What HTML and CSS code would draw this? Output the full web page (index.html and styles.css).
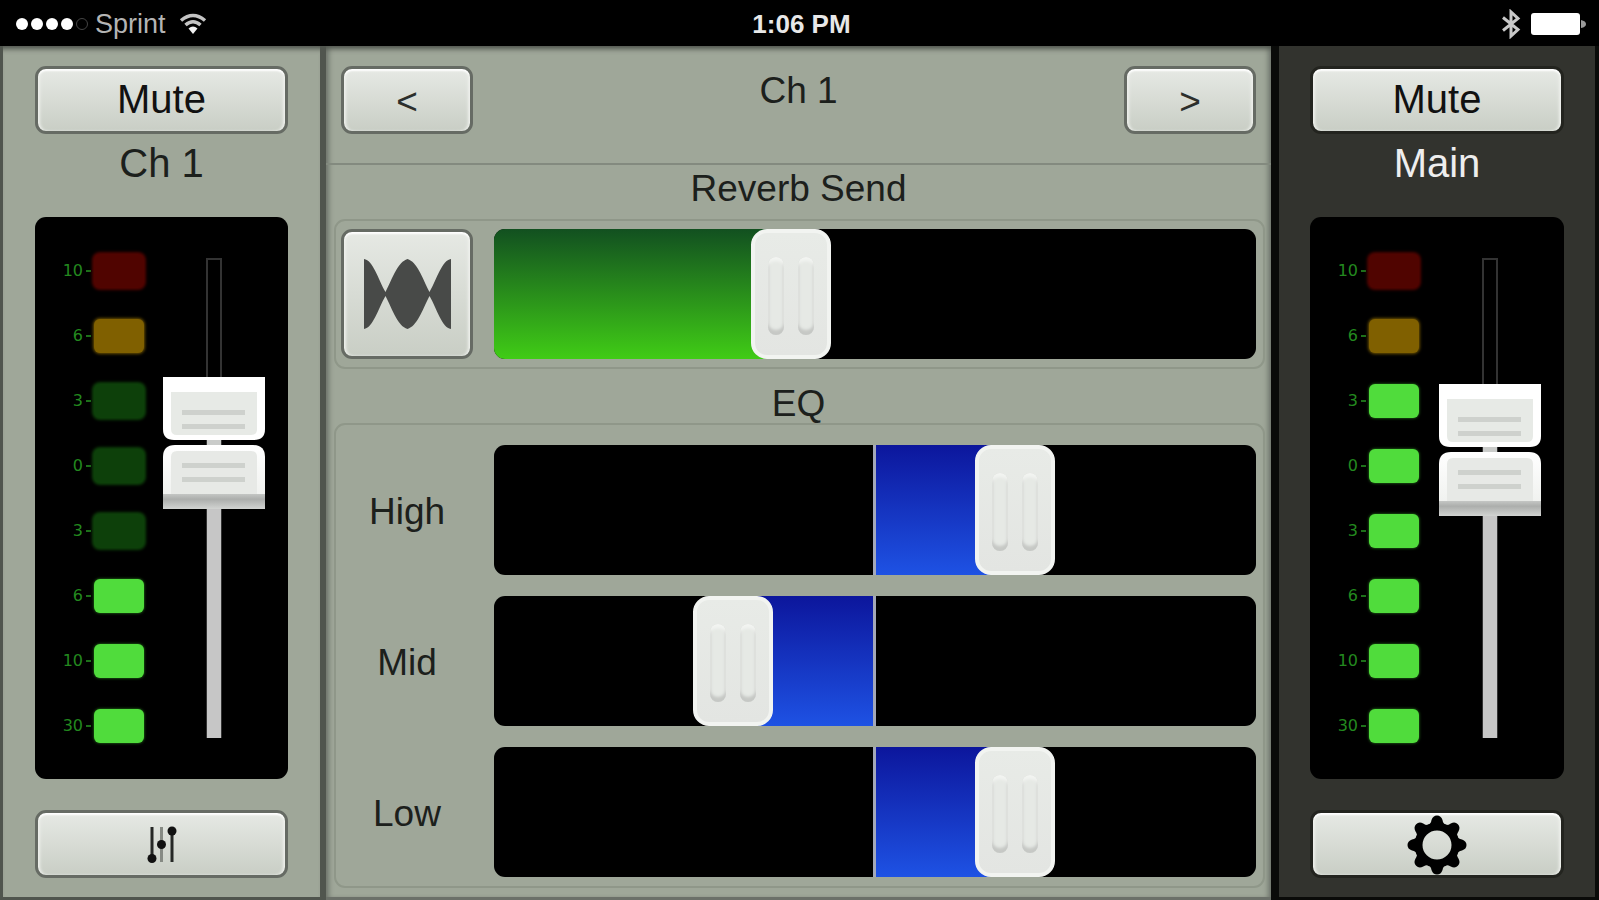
FILE: index.html
```html
<!DOCTYPE html>
<html lang="en">
<head>
<meta charset="utf-8">
<meta name="viewport" content="width=device-width, initial-scale=1">
<title>Mixer</title>
<link rel="stylesheet" href="styles.css">
</head>
<body>
<svg class="defs" aria-hidden="true">
  <defs>
    <linearGradient id="lip" x1="0" y1="0" x2="0" y2="1">
      <stop offset="0" stop-color="#c4c6c4"/><stop offset="0.350" stop-color="#acaeac"/><stop offset="1" stop-color="#d2d4d2"/>
    </linearGradient>
    <linearGradient id="side" x1="0" y1="0" x2="0" y2="1">
      <stop offset="0" stop-color="#ffffff"/><stop offset="1" stop-color="#eceeeb"/>
    </linearGradient>
    <symbol id="cap" viewBox="0 0 102 132">
      <rect x="44" y="58" width="14" height="16" fill="#c9cbc9"/>
      <path d="M0 0H102V52Q102 63 91 63H11Q0 63 0 52Z" fill="#fff"/>
      <path d="M8 15H94V52Q94 58 88 58H14Q8 58 8 52Z" fill="#e7eae6"/>
      <rect x="19" y="33" width="63" height="5" fill="#ced1cd"/>
      <rect x="19" y="47" width="63" height="5" fill="#ced1cd"/>
      <path d="M0 80Q0 68 12 68H90Q102 68 102 80V132H0Z" fill="url(#side)"/>
      <path d="M8 80Q8 74 14 74H88Q94 74 94 80V117H8Z" fill="#e7e9e6"/>
      <rect x="19" y="86" width="63" height="5" fill="#ced1cd"/>
      <rect x="19" y="100" width="63" height="5" fill="#ced1cd"/>
      <rect y="117" width="102" height="15" fill="url(#lip)"/>
    </symbol>
  </defs>
</svg>

<header class="status">
  <div class="status-left">
    <span class="signal" role="img" aria-label="Signal 4 of 5"><i></i><i></i><i></i><i></i><i class="off"></i></span>
    <span class="carrier">Sprint</span>
    <svg class="wifi" viewBox="0 0 28 22" aria-hidden="true">
      <path d="M2 7.500Q14-2.500 26 7.500" fill="none" stroke="#c4c4c4" stroke-width="3.500"/>
      <path d="M6.500 12Q14 5.500 21.500 12" fill="none" stroke="#c4c4c4" stroke-width="3.500"/>
      <path d="M9.500 15.500Q14 11.500 18.500 15.500L14 21Z" fill="#f0f0f0"/>
    </svg>
  </div>
  <time class="clock">1:06 PM</time>
  <div class="status-right">
    <svg class="bluetooth" viewBox="0 0 20 30" aria-hidden="true">
      <path d="M2 8.500L17 20.500L10 27V3L17 9.500L2 21.500" fill="none" stroke="#c8c8c8" stroke-width="3"/>
    </svg>
    <svg class="battery" viewBox="0 0 56 22" aria-hidden="true">
      <rect x="0" y="0" width="49" height="22" rx="3" fill="#fff"/>
      <path d="M50 7Q55 8 55 11Q55 14 50 15Z" fill="#999"/>
    </svg>
  </div>
</header>

<main class="mixer">
  <section class="strip" aria-label="Channel strip">
    <button class="btn" type="button">Mute</button>
    <h2 class="strip-name">Ch 1</h2>
    <div class="meter">
      <ol class="leds">
        <li><span>10</span><i class="led red"></i></li>
        <li><span>6</span><i class="led amber"></i></li>
        <li><span>3</span><i class="led dim"></i></li>
        <li><span>0</span><i class="led dim"></i></li>
        <li><span>3</span><i class="led dim"></i></li>
        <li><span>6</span><i class="led lit"></i></li>
        <li><span>10</span><i class="led lit"></i></li>
        <li><span>30</span><i class="led lit"></i></li>
      </ol>
      <div class="fader" style="--level: 61.500%">
        <div class="rail"></div>
        <svg class="cap" aria-hidden="true"><use href="#cap"/></svg>
        <input type="range" min="0" max="100" value="62" aria-label="Ch 1 level">
      </div>
    </div>
    <button class="btn icon-btn" type="button" aria-label="Channel settings">
      <svg class="icon-faders" viewBox="0 0 32 40" aria-hidden="true">
        <g stroke="#262826" stroke-width="3"><path d="M6 2V34M26 6V37"/><path d="M15.500 2V37" stroke="#868a84"/></g>
        <g fill="#111"><circle cx="6" cy="33.500" r="4.500"/><circle cx="15.500" cy="19.500" r="4.500"/><circle cx="26" cy="6" r="4.500"/></g>
      </svg>
    </button>
  </section>

  <section class="channel" aria-label="Channel detail">
    <div class="channel-head">
      <button class="btn nav" type="button" aria-label="Previous channel">&lt;</button>
      <h1 class="channel-name">Ch 1</h1>
      <button class="btn nav" type="button" aria-label="Next channel">&gt;</button>
    </div>
    <h2 class="group-title">Reverb Send</h2>
    <div class="group reverb">
      <button class="btn wave" type="button" aria-label="Reverb type">
        <svg viewBox="0 0 87 70" aria-hidden="true">
          <path fill="#484a48" d="M0 0C9 1 14 20 21.500 33C29 18 34 3 43.500 0C53 3 58 18 65.500 33C73 20 78 1 87 0V70C78 69 73 50 65.500 37C58 52 53 67 43.500 70C34 67 29 52 21.500 37C14 50 9 69 0 70Z"/>
        </svg>
      </button>
      <div class="slider">
        <div class="fill green" style="left: 0; width: 39%"></div>
        <div class="thumb" style="left: 39%"></div>
        <input type="range" min="0" max="100" value="39" aria-label="Reverb send">
      </div>
    </div>
    <h2 class="group-title eq-title">EQ</h2>
    <div class="group eq">
      <label for="high">High</label>
      <div class="slider">
        <div class="fill blue" style="left: 50%; width: 18%"></div>
        <div class="center-line"></div>
        <div class="thumb" style="left: 68.400%"></div>
        <input id="high" type="range" min="0" max="100" value="68">
      </div>
      <label for="mid">Mid</label>
      <div class="slider">
        <div class="fill blue" style="left: 31%; width: 19%"></div>
        <div class="center-line"></div>
        <div class="thumb" style="left: 31.400%"></div>
        <input id="mid" type="range" min="0" max="100" value="31">
      </div>
      <label for="low">Low</label>
      <div class="slider">
        <div class="fill blue" style="left: 50%; width: 18%"></div>
        <div class="center-line"></div>
        <div class="thumb" style="left: 68.400%"></div>
        <input id="low" type="range" min="0" max="100" value="68">
      </div>
    </div>
  </section>

  <section class="strip main-strip" aria-label="Main strip">
    <button class="btn" type="button">Mute</button>
    <h2 class="strip-name">Main</h2>
    <div class="meter">
      <ol class="leds">
        <li><span>10</span><i class="led red"></i></li>
        <li><span>6</span><i class="led amber"></i></li>
        <li><span>3</span><i class="led lit"></i></li>
        <li><span>0</span><i class="led lit"></i></li>
        <li><span>3</span><i class="led lit"></i></li>
        <li><span>6</span><i class="led lit"></i></li>
        <li><span>10</span><i class="led lit"></i></li>
        <li><span>30</span><i class="led lit"></i></li>
      </ol>
      <div class="fader" style="--level: 60%">
        <div class="rail"></div>
        <svg class="cap" aria-hidden="true"><use href="#cap"/></svg>
        <input type="range" min="0" max="100" value="60" aria-label="Main level">
      </div>
    </div>
    <button class="btn icon-btn" type="button" aria-label="Settings">
      <svg class="icon-gear" viewBox="-30 -30 60 60" aria-hidden="true">
        <circle r="18.500" fill="none" stroke="#000" stroke-width="8"/>
        <g id="teeth">
          <path id="tooth" d="M-10-19Q-6-21-5.500-25Q-4-29.500 0-29.500Q4-29.500 5.500-25Q6-21 10-19Z"/>
          <use href="#tooth" transform="rotate(45)"/>
          <use href="#tooth" transform="rotate(90)"/>
          <use href="#tooth" transform="rotate(135)"/>
        </g>
        <use href="#teeth" transform="rotate(180)"/>
      </svg>
    </button>
  </section>
</main>
</body>
</html>
```

FILE: styles.css
```css
* { box-sizing: border-box; }

body {
  margin: 0;
  min-height: 100vh;
  display: flex;
  flex-direction: column;
  background: #000;
  color: #1c201c;
  font-family: "Liberation Sans", Arial, sans-serif;
}

h1, h2, ol { margin: 0; padding: 0; font-weight: 400; }

.defs { position: absolute; width: 0; height: 0; }

/* Status bar */
.status {
  height: 46px;
  flex: none;
  display: grid;
  grid-template-columns: 1fr auto 1fr;
  align-items: center;
  padding: 2px 12px 0 16px;
  color: #fff;
}
.status-left, .status-right { display: flex; align-items: center; }
.status-right { justify-content: flex-end; gap: 10px; }
.signal { display: flex; gap: 3px; margin-right: 7px; }
.signal i { width: 12px; height: 12px; border-radius: 50%; background: #fff; }
.signal .off { background: none; border: 1px solid #444; }
.carrier { font-size: 27px; line-height: 32px; color: #b4b4b4; }
.wifi { width: 28px; height: 22px; margin-left: 13px; }
.clock { font-size: 26px; line-height: 32px; font-weight: 700; color: #e8e8e8; }
.bluetooth { width: 20px; height: 30px; }
.battery { width: 56px; height: 22px; }

/* Layout */
.mixer {
  flex: 1;
  display: grid;
  grid-template-columns: minmax(0, 326fr) minmax(0, 945fr) minmax(0, 328fr);
}

.strip {
  display: flex;
  flex-direction: column;
  padding: 20px 32px 19px 32px;
  background: #9fa799;
  border: solid #50554e;
  border-width: 0 6px 3px 3px;
  box-shadow: inset 0 7px 5px -4px #50554e;
}
.main-strip {
  padding: 20px 31px 19px;
  background: #32332e;
  border-color: #0a0b09;
  border-width: 0 4px 3px 8px;
  box-shadow: none;
}
.strip-name {
  height: 83px;
  font-size: 40px;
  line-height: 58px;
  text-align: center;
}
.main-strip .strip-name { color: #eee; }

.btn {
  height: 68px;
  flex: none;
  display: flex;
  align-items: center;
  justify-content: center;
  padding: 0 0 2px;
  border: 3px solid #666b64;
  border-radius: 11px;
  background: linear-gradient(#e6e9e4, #c9cec5);
  box-shadow: inset 0 3px 2px -1px #fff, inset 3px 0 3px -1px #eef0ec, inset -3px 0 3px -1px #eef0ec;
  color: #111;
  font-family: inherit;
  font-size: 40px;
  line-height: 48px;
}
.icon-btn { padding: 2px 0 0; }
.main-strip .btn { border-color: #23241f; }
.icon-faders { width: 32px; height: 40px; }
.icon-gear { width: 60px; height: 60px; }

/* Level meter */
.meter {
  flex: 1;
  display: flex;
  justify-content: space-between;
  margin-bottom: 31px;
  padding-right: 23px;
  border-radius: 11px;
  background: #000;
}
.leds {
  display: grid;
  grid-auto-rows: 1fr;
  padding: 21px 0;
  list-style: none;
}
.leds li {
  display: grid;
  grid-template-columns: 48px 5px 50px;
  column-gap: 3px;
  align-items: center;
  color: #23891f;
  font-family: "DejaVu Sans", sans-serif;
  font-size: 16px;
  line-height: 20px;
  text-align: right;
}
.leds li::before {
  content: "";
  grid-column: 2;
  grid-row: 1;
  height: 2px;
  background: #1d701a;
}
.leds span { grid-column: 1; grid-row: 1; }
.led { grid-column: 3; grid-row: 1; height: 34px; border-radius: 6px; }
.lit { background: #50dc3c; box-shadow: 0 0 3px #2d8a20; }
.dim { background: #0d400a; box-shadow: 0 0 3px 2px #0d400a; }
.red { background: #500400; box-shadow: 0 0 3px 2px #500400; }
.amber { background: #806000; box-shadow: 0 0 3px 1px #6a5000; }

.fader { position: relative; width: 102px; margin: 41px 0; }
.rail {
  width: 16px;
  height: 100%;
  margin: 0 auto;
  border: 2px solid #333;
  background: #000;
}
.rail::after {
  content: "";
  position: absolute;
  left: 44px;
  bottom: 0;
  width: 14px;
  height: var(--level);
  background: #c6c6c6;
}
.cap {
  position: absolute;
  z-index: 1;
  left: 0;
  bottom: calc(var(--level) - 66px);
  width: 102px;
  height: 132px;
}

/* Channel detail */
.channel {
  display: flex;
  flex-direction: column;
  padding-bottom: 9px;
  background: #9fa799;
  border-bottom: 3px solid #6b7069;
  box-shadow: inset 0 7px 5px -4px #50554e, inset 6px 0 5px -3px #70766d, inset -6px 0 5px -3px #70766d;
}
.channel-head {
  height: 119px;
  display: flex;
  justify-content: space-between;
  align-items: flex-start;
  padding: 20px 15px 0;
  border-bottom: 2px solid #838a7f;
}
.nav { width: 132px; font-size: 37px; color: #2c2f2c; padding: 4px 0 0; }
.channel-name, .group-title, .eq label { font-size: 37px; line-height: 48px; text-align: center; }
.channel-name { line-height: 50px; }
.group-title { height: 54px; }
.eq-title { padding-top: 11px; }
.eq label { padding-top: 4px; }
.group {
  margin: 0 6px 0 8px;
  padding: 8px 7px 8px 5px;
  border: 2px solid #8f9789;
  border-radius: 11px;
  display: grid;
  grid-template-columns: 132px minmax(0, 1fr);
  column-gap: 21px;
  row-gap: 21px;
  align-items: center;
}
.eq { flex: 1; grid-auto-rows: minmax(120px, 1fr); padding: 20px 7px 9px 5px; }
.wave { height: 130px; padding: 0; }
.wave svg { width: 87px; height: 70px; }

.slider {
  position: relative;
  height: 100%;
  overflow: hidden;
  border-radius: 11px;
  background: #000;
}
.fill { position: absolute; top: 0; bottom: 0; }
.green { background: linear-gradient(#125020, #40cc16); }
.blue { background: linear-gradient(#0c169c, #1e52e4); }
.center-line {
  position: absolute;
  top: 0;
  bottom: 0;
  left: 50%;
  width: 3px;
  margin-left: -2px;
  background: #a4a8b8;
}
.thumb {
  position: absolute;
  top: 0;
  bottom: 0;
  width: 80px;
  margin-left: -40px;
  border: 4px solid #f2f4f1;
  border-radius: 16px;
  background: linear-gradient(#e8ebe7, #e3e5e2);
}
.thumb::before, .thumb::after {
  content: "";
  position: absolute;
  top: 24px;
  bottom: 20px;
  left: 13px;
  width: 16px;
  border-radius: 8px;
  background: #e6e9e5;
  box-shadow: inset 0 -6px 3px -1px #c6c8c5, inset 0 4px 3px #f2f4f1, inset 2px 0 2px #d8dbd7, inset -2px 0 2px #d8dbd7;
}
.thumb::after { left: auto; right: 13px; }

input[type="range"] {
  position: absolute;
  z-index: 2;
  inset: 0;
  width: 100%;
  height: 100%;
  margin: 0;
  appearance: none;
  background: transparent;
  cursor: pointer;
}
input[type="range"]::-webkit-slider-thumb {
  appearance: none;
  width: 80px;
  height: 120px;
  background: transparent;
}
.fader input[type="range"] { writing-mode: vertical-lr; direction: rtl; }
.fader input[type="range"]::-webkit-slider-thumb { width: 102px; height: 132px; }
```
